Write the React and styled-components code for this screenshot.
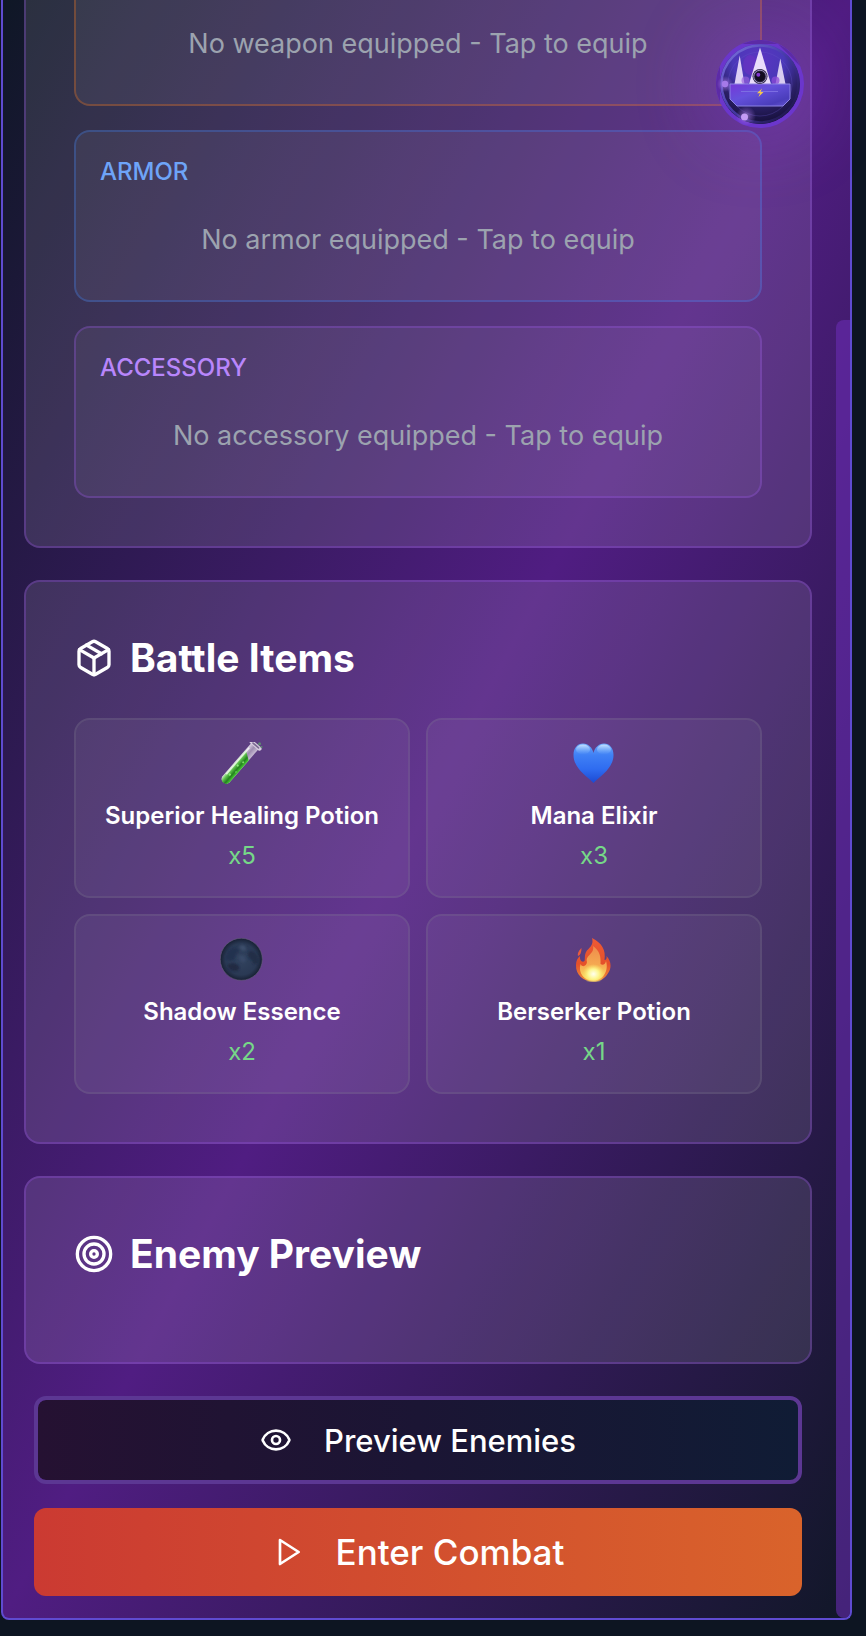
import React from "react";
import styled, { createGlobalStyle } from "styled-components";
import { Eye, Package, Target } from "lucide-react";

const GlobalStyle = createGlobalStyle`
  *, *::before, *::after { box-sizing: border-box; }
  body {
    margin: 0;
    background: #0d1522;
    color: #fff;
    font-family: Inter, "Liberation Sans", sans-serif;
  }
  button { font: inherit; color: inherit; cursor: pointer; }
`;

const Page = styled.div`
  position: relative;
  padding: 0 14px 16px 1px;
`;

const Frame = styled.div`
  display: grid;
  grid-template-columns: minmax(0, 1fr) 14px;
  border: 2px solid #5f4bd0;
  border-top: 0;
  border-radius: 0 0 8px 8px;
  background: linear-gradient(to bottom right, #0f1726, #501d82 50%, #111728);
`;

const Content = styled.main`
  display: flex;
  flex-direction: column;
  gap: 32px;
  padding: 0 24px 22px 21px;
`;

const ScrollTrack = styled.div`
  display: flex;
  padding-top: 320px;
`;

const ScrollThumb = styled.div`
  flex: 1;
  border-radius: 8px 0 6px 8px;
  background: rgba(107, 45, 181, 0.58);
`;

const Panel = styled.section`
  display: flex;
  flex-direction: column;
  padding: ${(p) => (p.$continued ? "0 48px 48px" : "48px")};
  border: 2px solid rgba(152, 84, 232, 0.3);
  border-top-width: ${(p) => (p.$continued ? "0" : "2px")};
  border-radius: ${(p) => (p.$continued ? "0 0 16px 16px" : "16px")};
  background: rgba(255, 255, 255, 0.11);
`;

const PanelTitle = styled.h2`
  display: flex;
  align-items: center;
  gap: 16px;
  margin: 0 0 32px;
  font-size: 39px;
  line-height: 56px;
  font-weight: 700;
  white-space: nowrap;
`;

const SlotList = styled.div`
  display: flex;
  flex-direction: column;
  gap: 24px;
`;

const Slot = styled.button`
  display: flex;
  flex-direction: column;
  gap: 16px;
  padding: ${(p) => (p.$continued ? "8px 24px 24px" : "24px")};
  border: 2px solid ${(p) => p.$border};
  border-top-width: ${(p) => (p.$continued ? "0" : "2px")};
  border-radius: ${(p) => (p.$continued ? "0 0 16px 16px" : "16px")};
  background: rgba(255, 255, 255, 0.05);
  text-align: left;
`;

const SlotLabel = styled.span`
  color: ${(p) => p.$color};
  font-size: 24px;
  line-height: 32px;
  font-weight: 500;
  text-transform: uppercase;
`;

const SlotText = styled.span`
  align-self: stretch;
  padding: 16px 0;
  color: #9ca3af;
  font-size: 27px;
  line-height: 40px;
  text-align: center;
`;

const ItemGrid = styled.ul`
  display: grid;
  grid-template-columns: 1fr 1fr;
  gap: 16px;
  margin: 0;
  padding: 0;
  list-style: none;
`;

const Item = styled.li`
  display: flex;
  flex-direction: column;
  align-items: center;
  padding: 24px 0;
  border: 2px solid rgba(128, 128, 140, 0.22);
  border-radius: 16px;
  background: rgba(255, 255, 255, 0.05);
`;

const ItemArt = styled.div`
  display: flex;
  align-items: center;
  height: 40px;
  margin-bottom: 16px;
  svg { flex: none; }
`;

const ItemName = styled.div`
  margin-bottom: 8px;
  font-size: 24px;
  line-height: 32px;
  font-weight: 600;
`;

const ItemCount = styled.div`
  color: #76d888;
  font-size: 24px;
  line-height: 32px;
`;

const Actions = styled.div`
  display: flex;
  flex-direction: column;
  gap: 24px;
  padding: 0 10px;
`;

const ActionButton = styled.button`
  display: flex;
  align-items: center;
  justify-content: center;
  gap: 32px;
  height: 88px;
  padding: 0;
  border: 0;
  border-radius: 12px;
  font-weight: 500;
`;

const PreviewButton = styled(ActionButton)`
  border: 4px solid #5c3793;
  background: linear-gradient(to right, #251132, #1b1534 50%, #101c35) padding-box;
  font-size: 31px;
`;

const CombatButton = styled(ActionButton)`
  background: linear-gradient(to right, #cb3a32, #d9632b);
  font-size: 35px;
`;

const Orb = styled.button`
  position: absolute;
  top: 40px;
  right: 62px;
  width: 88px;
  height: 88px;
  padding: 0;
  border: 0;
  border-radius: 50%;
  background: #6b36cc;
  box-shadow: 0 0 80px rgba(139, 60, 220, 0.45);
  svg { display: block; }
`;

const PlayOutline = () => (
  <svg width="32" height="32" viewBox="0 0 24 24" fill="none" stroke="currentColor" strokeWidth="2" strokeLinejoin="round" aria-hidden="true">
    <polygon points="6 3 20 12 6 21 6 3" />
  </svg>
);

const TestTube = () => (
  <svg width="44" height="44" viewBox="0 0 44 44" aria-hidden="true">
    <defs>
      <linearGradient id="tubeGlass" x1="0" y1="0" x2="1" y2="0">
        <stop offset="0" stopColor="#f3eef7" />
        <stop offset="0.5" stopColor="#a99bb8" />
        <stop offset="1" stopColor="#d9d0e2" />
      </linearGradient>
      <linearGradient id="tubeFluid" x1="0" y1="0" x2="1" y2="0">
        <stop offset="0" stopColor="#b9eaae" />
        <stop offset="0.3" stopColor="#5cc04a" />
        <stop offset="0.65" stopColor="#24801f" />
        <stop offset="1" stopColor="#48cf35" />
      </linearGradient>
    </defs>
    <g transform="translate(-3 0) rotate(41 22 22)">
      <path d="M17.500 -2 H27 V42 A4.800 4.800 0 0 1 17.500 42 Z" fill="url(#tubeGlass)" opacity="0.85" />
      <path d="M18 7 L27 13 V42 A4.500 4.500 0 0 1 18 42 Z" fill="url(#tubeFluid)" />
      <path d="M19 3 V38" stroke="#fff" strokeWidth="1.6" opacity="0.7" />
      <rect x="15" y="-5" width="14.500" height="4" rx="2" fill="#d8cfe0" />
      <rect x="18" y="-3.800" width="9" height="1.600" rx="0.800" fill="#7b6a92" />
      <circle cx="24" cy="18" r="1" fill="#7ede68" />
      <circle cx="22" cy="24" r="1.1" fill="#8ae577" />
      <circle cx="25" cy="30" r="0.9" fill="#62cb50" />
      <circle cx="22" cy="36" r="1.2" fill="#8ae577" />
    </g>
    <circle cx="39.500" cy="1.800" r="1.500" fill="#5e8a72" />
    <circle cx="41.500" cy="5" r="1" fill="#5e8a72" />
  </svg>
);

const BlueHeart = () => (
  <svg width="44" height="44" viewBox="0 0 44 44" aria-hidden="true">
    <defs>
      <linearGradient id="heartFill" x1="0" y1="0" x2="0" y2="1">
        <stop offset="0" stopColor="#6aa6fa" />
        <stop offset="0.3" stopColor="#3f80f5" />
        <stop offset="0.65" stopColor="#2f6cf0" />
        <stop offset="1" stopColor="#1c49d2" />
      </linearGradient>
      <linearGradient id="heartShine" x1="0" y1="0" x2="0" y2="1">
        <stop offset="0" stopColor="#c4e2ff" />
        <stop offset="1" stopColor="#7db4fb" stopOpacity="0" />
      </linearGradient>
    </defs>
    <path d="M21.500 41 C14.500 34 1.500 26 1.500 13 C1.500 6 5.500 1.500 11 1.500 C16.500 1.500 20.500 6 21.500 11 C22.500 6 26.500 1.500 32 1.500 C37.500 1.500 41.500 6 41.500 13 C41.500 26 28.500 34 21.500 41 Z" fill="url(#heartFill)" />
    <ellipse cx="11" cy="7.500" rx="7" ry="5" fill="url(#heartShine)" />
    <ellipse cx="32" cy="7.500" rx="7" ry="5" fill="url(#heartShine)" />
  </svg>
);

const NewMoon = () => (
  <svg width="44" height="44" viewBox="0 0 44 44" aria-hidden="true">
    <defs>
      <radialGradient id="moonFill" cx="0.5" cy="0.5" r="0.5">
        <stop offset="0" stopColor="#32435f" />
        <stop offset="0.75" stopColor="#2a3954" />
        <stop offset="1" stopColor="#172033" />
      </radialGradient>
      <filter id="moonSoft"><feGaussianBlur stdDeviation="1" /></filter>
    </defs>
    <circle cx="21.300" cy="21.300" r="21" fill="url(#moonFill)" stroke="#655e78" strokeWidth="0.600" />
    <g filter="url(#moonSoft)">
      <path d="M5 19 C9 9 16 8 19 12 C18 17 14 16 15 21 C11 23 8 24 5 19 Z" fill="#243150" />
      <path d="M28 14 C34 11 39 17 39 24 C36 29 32 25 32 22 C29 20 27 18 28 14 Z" fill="#202d47" />
      <path d="M7 27 C13 23 20 26 19 31 C16 35 9 33 7 27 Z" fill="#202a43" />
      <path d="M19 8 C23 6 27 8 26 12 C23 14 20 12 19 8 Z" fill="#3c4d6b" />
      <path d="M19 18 C24 16 27 20 25 24 C21 24 19 22 19 18 Z" fill="#394a68" />
    </g>
  </svg>
);

const Flame = () => (
  <svg width="44" height="44" viewBox="0 0 44 44" aria-hidden="true">
    <defs>
      <linearGradient id="flameOuter" x1="0" y1="0" x2="0" y2="1">
        <stop offset="0" stopColor="#ee5a36" />
        <stop offset="0.6" stopColor="#e4502a" />
        <stop offset="1" stopColor="#f0913a" />
      </linearGradient>
      <linearGradient id="flameInner" x1="0" y1="0" x2="0" y2="1">
        <stop offset="0" stopColor="#ee8c4c" />
        <stop offset="0.55" stopColor="#f5a951" />
        <stop offset="1" stopColor="#fbe566" />
      </linearGradient>
      <radialGradient id="flameCore">
        <stop offset="0" stopColor="#fffff0" />
        <stop offset="0.5" stopColor="#fdf68e" />
        <stop offset="1" stopColor="#fbe566" stopOpacity="0" />
      </radialGradient>
    </defs>
    <path d="M20 0 C30 5 34 12 32.500 22 C34.500 22 35 20 34.500 18 C40 24 39.500 31 35.500 36 C32.500 41 27.500 43.500 21.500 43.500 C11.500 43.500 3.500 37 4 27 C4 23 5.500 20 8 18 C7.500 22 10 25 12.500 23 C13.500 21 11.500 15 16.500 11 C19.500 8 21.500 5 20 0 Z" fill="url(#flameOuter)" />
    <path d="M9.500 10 C9.500 14 8.500 17 6 18 C5 15 7.500 12 9.500 10 Z" fill="#e95b3d" />
    <path d="M21 8 C28 13 29 19 28.500 26 C31 28 33.500 26 34 23 C37 33 31 42.500 21.500 42.500 C12 42.500 6 35 8.500 26 C10.500 30 14.500 28 15 24 C13 17 23 16 21 8 Z" fill="url(#flameInner)" />
    <ellipse cx="21.500" cy="36" rx="11" ry="10" fill="url(#flameCore)" />
  </svg>
);

const CrownOrb = () => (
  <svg width="88" height="88" viewBox="0 0 88 88" aria-hidden="true">
    <defs>
      <radialGradient id="orbFill" cx="0.48" cy="0.2" r="0.8">
        <stop offset="0" stopColor="#5b35c2" />
        <stop offset="0.4" stopColor="#4a38b8" />
        <stop offset="0.7" stopColor="#2b2068" />
        <stop offset="1" stopColor="#150f38" />
      </radialGradient>
      <linearGradient id="orbRim" x1="0" y1="0" x2="1" y2="1">
        <stop offset="0" stopColor="#7f76e0" />
        <stop offset="0.45" stopColor="#4a3dae" />
        <stop offset="1" stopColor="#150e36" />
      </linearGradient>
      <linearGradient id="crownBase" x1="0" y1="0" x2="1" y2="1">
        <stop offset="0" stopColor="#7537d8" />
        <stop offset="0.4" stopColor="#6551dc" />
        <stop offset="0.8" stopColor="#4a3dbb" />
        <stop offset="1" stopColor="#6656d2" />
      </linearGradient>
      <radialGradient id="sparkGlow">
        <stop offset="0" stopColor="#d8b8ff" />
        <stop offset="0.4" stopColor="#a678e8" stopOpacity="0.7" />
        <stop offset="1" stopColor="#a678e8" stopOpacity="0" />
      </radialGradient>
    </defs>
    <path d="M4 26 A44 44 0 0 0 4 62 Z" fill="#5c2ba6" />
    <path d="M26 4 A44 44 0 0 1 62 4 Z" fill="#5c2ba6" />
    <path d="M62 4 A44 44 0 0 1 84 26 Z" fill="#5c2ba6" />
    <circle cx="44" cy="44" r="40" fill="url(#orbFill)" />
    <circle cx="44" cy="44" r="38.500" fill="none" stroke="url(#orbRim)" strokeWidth="2.500" />
    <circle cx="44" cy="44" r="32" fill="none" stroke="#6655c8" strokeWidth="1" opacity="0.3" />
    <ellipse cx="34" cy="25" rx="7" ry="10" fill="#7730c5" opacity="0.4" />
    <circle cx="9" cy="44" r="8" fill="url(#sparkGlow)" opacity="0.7" />
    <circle cx="30" cy="76" r="10" fill="url(#sparkGlow)" opacity="0.6" />
    <path d="M23.700 15.500 L28.500 44 H18.500 Z" fill="#dccff5" />
    <path d="M44 7.500 L55 44 H33 Z" fill="#e9dcfb" />
    <path d="M64.300 18.500 L69.500 44 H59.500 Z" fill="#d8ccf0" />
    <circle cx="29.500" cy="40.500" r="4" fill="#9a62dd" opacity="0.65" />
    <circle cx="59.500" cy="40.500" r="4" fill="#8e4bd8" opacity="0.75" />
    <path d="M14 44 H74 V59 L67 66 H21 L14 59 Z" fill="url(#crownBase)" stroke="#8c82e4" strokeWidth="1" />
    <path d="M25 51.500 H62" stroke="#7c6ee2" strokeWidth="1" />
    <circle cx="44" cy="36.500" r="7.500" fill="#2d2745" />
    <circle cx="44" cy="36.500" r="6.300" fill="none" stroke="#9b92bd" strokeWidth="1" />
    <circle cx="44" cy="36.500" r="5" fill="#110c20" />
    <circle cx="42.300" cy="34.700" r="2" fill="#8338d0" />
    <path d="M46 48.500 L41 53.200 H44 L42.500 57 L47.500 52 H44.500 Z" fill="#f5c74c" />
    <circle cx="28.500" cy="77" r="3.500" fill="#c39bf5" />
    <circle cx="9" cy="44" r="3.200" fill="#a57ae8" />
  </svg>
);

const items = [
  { name: "Superior Healing Potion", count: 5, Art: TestTube },
  { name: "Mana Elixir", count: 3, Art: BlueHeart },
  { name: "Shadow Essence", count: 2, Art: NewMoon },
  { name: "Berserker Potion", count: 1, Art: Flame },
];

export default function App() {
  return (
    <>
      <GlobalStyle />
      <Page>
        <Frame>
          <Content>
            <Panel $continued>
              <SlotList>
                <Slot type="button" $continued $border="rgba(249, 115, 22, 0.3)">
                  <SlotText>No weapon equipped - Tap to equip</SlotText>
                </Slot>
                <Slot type="button" $border="rgba(59, 130, 246, 0.3)">
                  <SlotLabel $color="#6ea4f8">Armor</SlotLabel>
                  <SlotText>No armor equipped - Tap to equip</SlotText>
                </Slot>
                <Slot type="button" $border="rgba(152, 84, 232, 0.3)">
                  <SlotLabel $color="#b886fb">Accessory</SlotLabel>
                  <SlotText>No accessory equipped - Tap to equip</SlotText>
                </Slot>
              </SlotList>
            </Panel>
            <Panel>
              <PanelTitle>
                <Package size={40} aria-hidden="true" />
                Battle Items
              </PanelTitle>
              <ItemGrid>
                {items.map(({ name, count, Art }) => (
                  <Item key={name}>
                    <ItemArt><Art /></ItemArt>
                    <ItemName>{name}</ItemName>
                    <ItemCount>x{count}</ItemCount>
                  </Item>
                ))}
              </ItemGrid>
            </Panel>
            <Panel>
              <PanelTitle>
                <Target size={40} aria-hidden="true" />
                Enemy Preview
              </PanelTitle>
            </Panel>
            <Actions>
              <PreviewButton type="button">
                <Eye size={32} aria-hidden="true" />
                Preview Enemies
              </PreviewButton>
              <CombatButton type="button">
                <PlayOutline />
                Enter Combat
              </CombatButton>
            </Actions>
          </Content>
          <ScrollTrack aria-hidden="true">
            <ScrollThumb />
          </ScrollTrack>
        </Frame>
        <Orb type="button" aria-label="Open assistant">
          <CrownOrb />
        </Orb>
      </Page>
    </>
  );
}
